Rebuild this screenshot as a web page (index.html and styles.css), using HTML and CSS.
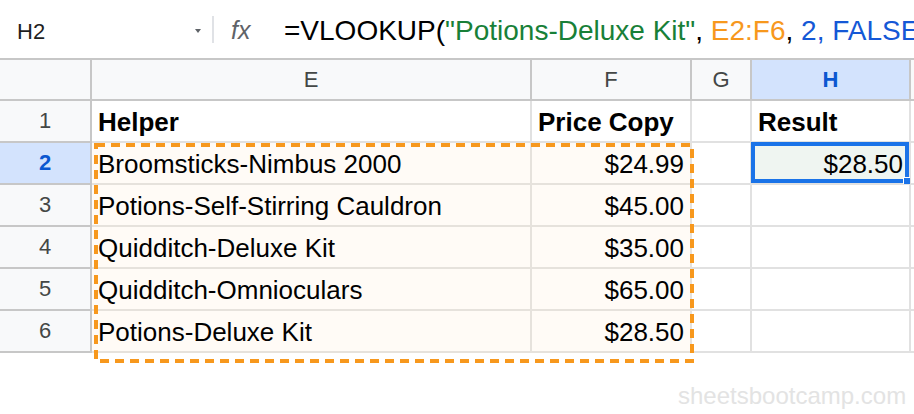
FILE: index.html
```html
<!DOCTYPE html>
<html lang="en">
<head>
<meta charset="utf-8">
<title>VLOOKUP example</title>
<link rel="stylesheet" href="styles.css">
</head>
<body>
<div class="app">
  <div class="formula-bar">
    <div class="namebox">
      <span class="cellref">H2</span>
      <svg class="caret" width="6" height="4" viewBox="0 0 6 4"><path d="M0 0H6L3 4Z" fill="#5f6368"/></svg>
    </div>
    <div class="sep"></div>
    <div class="fx">fx</div>
    <div class="formula"><span class="f-black">=VLOOKUP(</span><span class="f-green">"Potions-Deluxe Kit"</span><span class="f-black">, </span><span class="f-orange">E2:F6</span><span class="f-black">, </span><span class="f-blue">2, FALSE)</span></div>
  </div>

  <div class="sheet">
    <div class="grid">
      <div class="hd corner"></div>
      <div class="hd col">E</div>
      <div class="hd col">F</div>
      <div class="hd col">G</div>
      <div class="hd col active">H</div>
      <div class="hd col"></div>

      <div class="hd row">1</div>
      <div class="c b">Helper</div>
      <div class="c b">Price Copy</div>
      <div class="c"></div>
      <div class="c b">Result</div>
      <div class="c"></div>

      <div class="hd row active">2</div>
      <div class="c rng">Broomsticks-Nimbus 2000</div>
      <div class="c rng r">$24.99</div>
      <div class="c"></div>
      <div class="c r sel">$28.50</div>
      <div class="c"></div>

      <div class="hd row">3</div>
      <div class="c rng">Potions-Self-Stirring Cauldron</div>
      <div class="c rng r">$45.00</div>
      <div class="c"></div>
      <div class="c"></div>
      <div class="c"></div>

      <div class="hd row">4</div>
      <div class="c rng">Quidditch-Deluxe Kit</div>
      <div class="c rng r">$35.00</div>
      <div class="c"></div>
      <div class="c"></div>
      <div class="c"></div>

      <div class="hd row">5</div>
      <div class="c rng">Quidditch-Omnioculars</div>
      <div class="c rng r">$65.00</div>
      <div class="c"></div>
      <div class="c"></div>
      <div class="c"></div>

      <div class="hd row">6</div>
      <div class="c rng">Potions-Deluxe Kit</div>
      <div class="c rng r">$28.50</div>
      <div class="c"></div>
      <div class="c"></div>
      <div class="c"></div>
    </div>

    <svg class="range-outline" width="600" height="220" viewBox="0 0 600 220">
      <rect x="2" y="2" width="596" height="216" fill="none" stroke="#f7981d" stroke-width="4" stroke-dasharray="9 6"/>
    </svg>
  </div>

  <div class="watermark">sheetsbootcamp.com</div>
</div>
</body>
</html>
```

FILE: styles.css
```css
* { box-sizing: border-box; }

html, body {
  margin: 0;
  padding: 0;
  background: #ffffff;
  overflow: hidden;
}

.app {
  position: relative;
  width: 914px;
  height: 414px;
  font-family: "Liberation Sans", Arial, sans-serif;
  color: #000;
}

/* formula bar */
.formula-bar {
  height: 58px;
  padding-top: 5px;
  display: flex;
  align-items: center;
  white-space: nowrap;
  overflow: hidden;
}

.namebox {
  flex: 0 0 212px;
  display: flex;
  align-items: center;
  justify-content: space-between;
  padding: 0 11px 0 17px;
}

.cellref {
  font-size: 22px;
  color: #1f1f1f;
}

.caret { margin-top: -2px; }

.sep {
  flex: 0 0 2px;
  height: 27px;
  margin-top: -4px;
  background: #e0e2e6;
}

.fx {
  flex: 0 0 70px;
  padding-left: 17px;
  font-size: 25px;
  font-style: italic;
  color: #5f6368;
  margin-top: -3px;
}

.formula {
  flex: 0 0 auto;
  font-size: 28px;
  margin-top: -2px;
}

.f-black { color: #000; }
.f-green { color: #188038; }
.f-orange { color: #f7981d; }
.f-blue { color: #1558d6; }

/* sheet */
.sheet {
  position: relative;
  border-top: 2px solid #c7c7c7;
}

.grid {
  display: grid;
  grid-template-columns: 92px 440px 160px 60px 159px 1fr;
  grid-template-rows: 41px repeat(6, 42px);
}

.hd {
  background: #f8f9fa;
  color: #444746;
  font-size: 22px;
  display: flex;
  align-items: center;
  justify-content: center;
  border-right: 2px solid #c7c7c7;
  border-bottom: 2px solid #c7c7c7;
}

.hd.active {
  background: #d3e3fd;
  color: #0b57d0;
  font-weight: bold;
}

.c {
  font-size: 26px;
  line-height: 30px;
  display: flex;
  align-items: flex-end;
  padding: 0 6px 4px 6px;
  white-space: nowrap;
  overflow: hidden;
  border-right: 2px solid #e1e1e1;
  border-bottom: 2px solid #e1e1e1;
}

.c.b { font-weight: bold; }
.c.r { justify-content: flex-end; }

.c.rng {
  background: #fffbf6;
  border-color: #e6e2dc;
}

.c.sel {
  position: relative;
  overflow: visible;
  background: #eff5f1;
}

.c.sel::after {
  content: "";
  position: absolute;
  top: -1px;
  left: -1px;
  right: 0;
  bottom: 0;
  border: 4px solid #1a73e8;
}

.c.sel::before {
  content: "";
  position: absolute;
  right: -1px;
  bottom: -1px;
  width: 6px;
  height: 6px;
  background: #1a73e8;
  border-left: 1px solid #fff;
  border-top: 1px solid #fff;
  z-index: 2;
}

.range-outline {
  position: absolute;
  left: 94px;
  top: 83px;
}

.watermark {
  position: absolute;
  left: 678px;
  top: 381px;
  font-size: 24px;
  line-height: 30px;
  color: #e3e3e3;
}
```
